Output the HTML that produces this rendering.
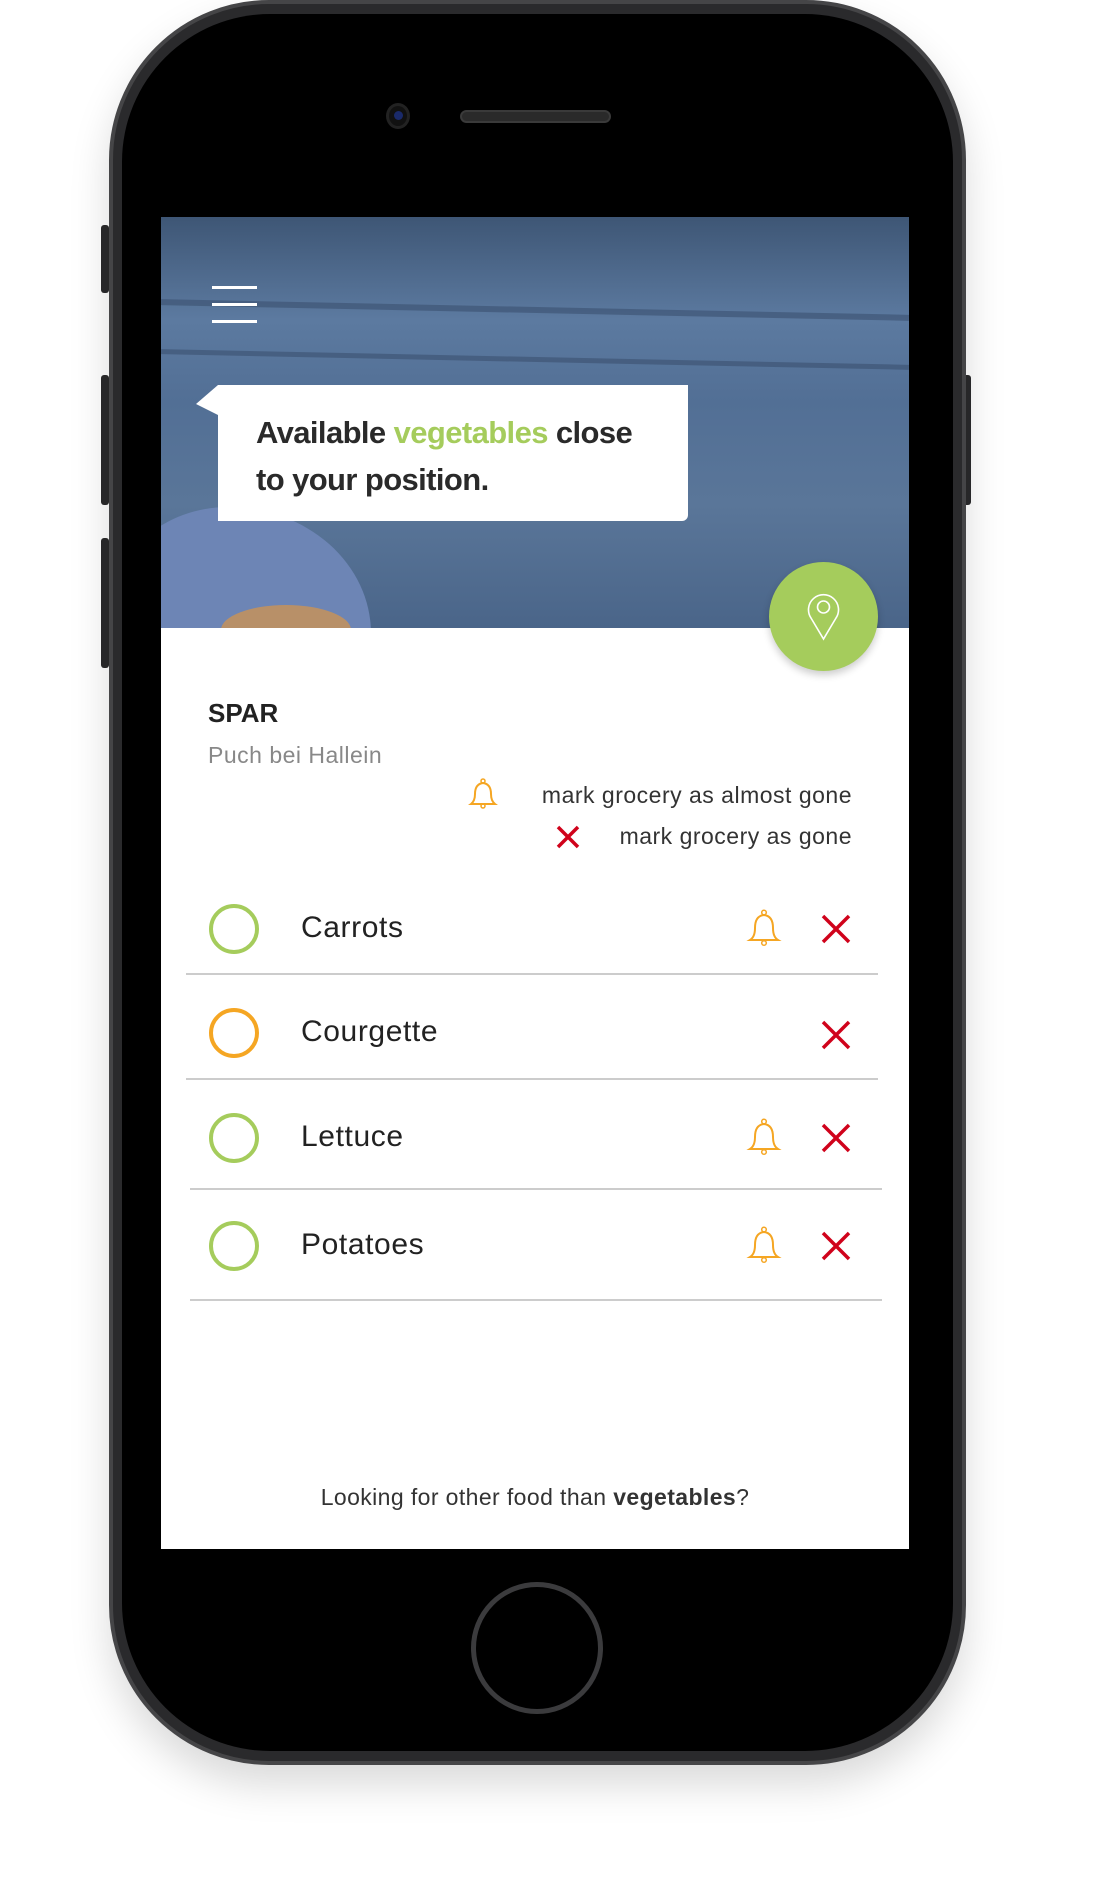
<!DOCTYPE html>
<html><head><meta charset="utf-8"><style>
*{margin:0;padding:0;box-sizing:border-box}
body{width:1095px;height:1894px;background:#fff;position:relative;overflow:hidden;font-family:"Liberation Sans",sans-serif}
.abs{position:absolute}
.phone{left:109px;top:0;width:857px;height:1765px;border-radius:160px;background:#2a2a2c;border:4px solid #454547;box-shadow:0 20px 40px rgba(0,0,0,.15)}
.inner{left:122px;top:14px;width:831px;height:1737px;border-radius:148px;background:#000}
.screen{left:161px;top:217px;width:748px;height:1332px;background:#fff;overflow:hidden}
.hero{left:0;top:0;width:748px;height:411px;overflow:hidden;background:linear-gradient(180deg,#3e5675 0%,#5c7aa0 25%,#526f95 45%,#5a7699 70%,#4a6589 100%)}
.txt{color:#222}
.row-line{height:2px;background:#ccc}
</style></head><body>
<div class="abs" style="left:101px;top:225px;width:8px;height:68px;background:#2a2a2c;border-radius:3px"></div>
<div class="abs" style="left:101px;top:375px;width:8px;height:130px;background:#2a2a2c;border-radius:3px"></div>
<div class="abs" style="left:101px;top:538px;width:8px;height:130px;background:#2a2a2c;border-radius:3px"></div>
<div class="abs" style="left:962px;top:375px;width:9px;height:130px;background:#2a2a2c;border-radius:3px"></div>
<div class="abs phone"></div>
<div class="abs inner"></div>
<div class="abs" style="left:386px;top:103px;width:24px;height:26px;border-radius:50%;background:#111;border:3px solid #222"><div style="margin:5px auto;width:9px;height:9px;border-radius:50%;background:#1a2a6a"></div></div>
<div class="abs" style="left:460px;top:110px;width:151px;height:13px;border-radius:7px;background:#2a2a2a;border:2px solid #3a3a3a"></div>
<div class="abs" style="left:471px;top:1582px;width:132px;height:132px;border-radius:50%;border:5px solid #3b3b3d;background:#000"></div>
<div class="abs screen">
 <div class="abs hero">
  <div class="abs" style="left:0;top:90px;width:748px;height:6px;background:#3a5070;opacity:.6;transform:rotate(1.2deg)"></div>
  <div class="abs" style="left:0;top:140px;width:748px;height:5px;background:#3a5070;opacity:.6;transform:rotate(1.2deg)"></div>
  <div class="abs" style="left:-50px;top:290px;width:260px;height:230px;border-radius:45% 55% 0 0;background:#6d85b5"></div>
  <div class="abs" style="left:60px;top:388px;width:130px;height:50px;border-radius:50% 50% 0 0;background:#b89068"></div>
  <div class="abs" style="left:51px;top:69px;width:45px;height:3px;background:#fff"></div>
  <div class="abs" style="left:51px;top:86px;width:45px;height:3px;background:#fff"></div>
  <div class="abs" style="left:51px;top:103px;width:45px;height:3px;background:#fff"></div>
  <svg class="abs" style="left:35px;top:168px" width="30" height="50"><polygon points="22,0 30,0 30,50 22,30 0,19" fill="#fff"/></svg>
  <div class="abs" style="left:57px;top:168px;width:470px;height:136px;background:#fff;border-radius:0 0 6px 0"></div>
  <div class="abs txt" style="left:95px;top:192px;font-family:'Liberation Sans Narrow','Liberation Sans',sans-serif;font-weight:bold;font-size:31px;letter-spacing:-0.6px;line-height:47px;color:#2a2a2a">Available <span style="color:#a5cc5c">vegetables</span> close<br>to your position.</div>
 </div>
 <div class="abs" style="left:608px;top:345px;width:109px;height:109px;border-radius:50%;background:#a5cc5c;box-shadow:0 4px 8px rgba(0,0,0,.2)">
  <svg width="109" height="109"><path d="M54.5 77 L42 56 A15 15 0 1 1 67 56 Z" fill="none" stroke="#fff" stroke-width="1.6"/><circle cx="54.5" cy="45" r="6" fill="none" stroke="#fff" stroke-width="1.6"/></svg>
 </div>
 <div class="abs txt" style="left:47px;top:481px;font-size:26px;font-weight:bold">SPAR</div>
 <div class="abs" style="left:47px;top:525px;font-size:23px;letter-spacing:0.5px;color:#888">Puch bei Hallein</div>
 <svg class="abs" style="left:306px;top:560px" width="32" height="34"><path d="M4 27 Q8 24 8 17 Q8 7 16 6 Q24 7 24 17 Q24 24 28 27 Z" fill="none" stroke="#f5a623" stroke-width="2"/><circle cx="16" cy="4" r="2" fill="none" stroke="#f5a623" stroke-width="1.5"/><circle cx="16" cy="29" r="2" fill="none" stroke="#f5a623" stroke-width="1.5"/></svg>
 <div class="abs" style="right:57px;top:565px;font-size:23px;letter-spacing:0.5px;color:#333">mark grocery as almost gone</div>
 <svg class="abs" style="left:395px;top:608px" width="24" height="24"><path d="M2 2L22 22M22 2L2 22" stroke="#d0021b" stroke-width="3.5"/></svg>
 <div class="abs" style="right:57px;top:606px;font-size:23px;letter-spacing:0.5px;color:#333">mark grocery as gone</div>

 <div class="abs" style="left:48px;top:687px;width:50px;height:50px;border-radius:50%;border:4px solid #a5cc5c"></div>
 <div class="abs txt" style="left:140px;top:694px;font-size:30px;letter-spacing:0.6px">Carrots</div>
 <div class="abs row-line" style="left:25px;top:756px;width:692px"></div>
 <div class="abs" style="left:48px;top:791px;width:50px;height:50px;border-radius:50%;border:4px solid #f5a623"></div>
 <div class="abs txt" style="left:140px;top:798px;font-size:30px;letter-spacing:0.6px">Courgette</div>
 <div class="abs row-line" style="left:25px;top:861px;width:692px"></div>
 <div class="abs" style="left:48px;top:896px;width:50px;height:50px;border-radius:50%;border:4px solid #a5cc5c"></div>
 <div class="abs txt" style="left:140px;top:903px;font-size:30px;letter-spacing:0.6px">Lettuce</div>
 <div class="abs row-line" style="left:29px;top:971px;width:692px"></div>
 <div class="abs" style="left:48px;top:1004px;width:50px;height:50px;border-radius:50%;border:4px solid #a5cc5c"></div>
 <div class="abs txt" style="left:140px;top:1011px;font-size:30px;letter-spacing:0.6px">Potatoes</div>
 <div class="abs row-line" style="left:29px;top:1082px;width:692px"></div>

 <svg class="abs" style="left:585px;top:691px" width="36" height="40"><path d="M4 32 Q9 29 9 20 Q9 8 18 7 Q27 8 27 20 Q27 29 32 32 Z" fill="none" stroke="#f5a623" stroke-width="2"/><circle cx="18" cy="4.5" r="2.3" fill="none" stroke="#f5a623" stroke-width="1.5"/><circle cx="18" cy="35" r="2.3" fill="none" stroke="#f5a623" stroke-width="1.5"/></svg>
 <svg class="abs" style="left:585px;top:900px" width="36" height="40"><path d="M4 32 Q9 29 9 20 Q9 8 18 7 Q27 8 27 20 Q27 29 32 32 Z" fill="none" stroke="#f5a623" stroke-width="2"/><circle cx="18" cy="4.5" r="2.3" fill="none" stroke="#f5a623" stroke-width="1.5"/><circle cx="18" cy="35" r="2.3" fill="none" stroke="#f5a623" stroke-width="1.5"/></svg>
 <svg class="abs" style="left:585px;top:1008px" width="36" height="40"><path d="M4 32 Q9 29 9 20 Q9 8 18 7 Q27 8 27 20 Q27 29 32 32 Z" fill="none" stroke="#f5a623" stroke-width="2"/><circle cx="18" cy="4.5" r="2.3" fill="none" stroke="#f5a623" stroke-width="1.5"/><circle cx="18" cy="35" r="2.3" fill="none" stroke="#f5a623" stroke-width="1.5"/></svg>
 <svg class="abs" style="left:660px;top:697px" width="30" height="30"><path d="M2 2L28 28M28 2L2 28" stroke="#d0021b" stroke-width="3.5"/></svg>
 <svg class="abs" style="left:660px;top:803px" width="30" height="30"><path d="M2 2L28 28M28 2L2 28" stroke="#d0021b" stroke-width="3.5"/></svg>
 <svg class="abs" style="left:660px;top:906px" width="30" height="30"><path d="M2 2L28 28M28 2L2 28" stroke="#d0021b" stroke-width="3.5"/></svg>
 <svg class="abs" style="left:660px;top:1014px" width="30" height="30"><path d="M2 2L28 28M28 2L2 28" stroke="#d0021b" stroke-width="3.5"/></svg>

 <div class="abs" style="left:0;width:748px;text-align:center;top:1267px;font-size:23px;letter-spacing:0.4px;color:#333">Looking for other food than <b>vegetables</b>?</div>
</div>
</body></html>
